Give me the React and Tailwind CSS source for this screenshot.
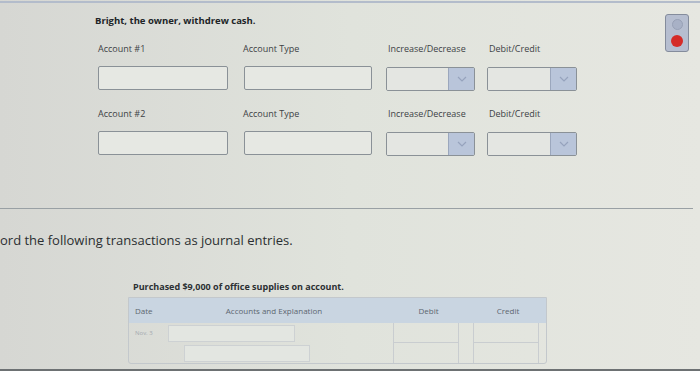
import React from "react";

const font = { fontFamily: "'Open Sans', 'Liberation Sans', sans-serif" };

function TextBox({ className = "" }) {
  return (
    <div className={`h-[24px] border-[1.5px] border-[#8a9197] bg-[#e6e8e3] rounded-[2px] ${className}`} />
  );
}

function Dropdown({ className = "" }) {
  return (
    <div className={`flex h-[24px] border-[1.5px] border-[#8a9197] rounded-[2px] overflow-hidden ${className}`}>
      <div className="flex-1 bg-[#e4e6e2]" />
      <div className="w-[26px] bg-[#b9c5da] border-l border-[#9ba7bd] flex items-center justify-center">
        <svg width="10" height="6" viewBox="0 0 10 6" fill="none">
          <path d="M1 1l4 4 4-4" stroke="#96a3bd" strokeWidth="1.2" />
        </svg>
      </div>
    </div>
  );
}

function EntryRow({ label, labelPad = "pt-[43px]" }) {
  return (
    <div className={`${labelPad}`}>
      <div className="flex text-[9px] leading-[12px] text-[#3d4245]">
        <span className="w-[130px]">{label}</span>
        <span className="ml-[15px] w-[129px]">Account Type</span>
        <span className="ml-[16px] w-[99px]">Increase/Decrease</span>
        <span className="ml-[2px]">Debit/Credit</span>
      </div>
      <div className="flex mt-[11px]">
        <TextBox className="w-[130px]" />
        <TextBox className="ml-[16px] w-[128px]" />
        <Dropdown className="ml-[14px] w-[89px] mt-[1px]" />
        <Dropdown className="ml-[12px] w-[90px] mt-[1px]" />
      </div>
    </div>
  );
}

export default function App() {
  return (
    <div
      style={font}
      className="relative w-[700px] h-[371px] overflow-hidden bg-linear-to-r from-[#d6d7d3] via-[#e0e3dc] to-[#e6e7e1]"
    >
      {/* top edge */}
      <div className="h-[3px] border-t-2 border-[#b3bccb] mt-[1px]" />

      {/* question block */}
      <div className="h-[204px] pl-[98px]">
        <p className="ml-[-3px] pt-[10px] text-[9.5px] leading-[13px] font-bold text-[#202427]">
          Bright, the owner, withdrew cash.
        </p>
        <EntryRow label="Account #1" labelPad="pt-[16px]" />
        <EntryRow label="Account #2" labelPad="pt-[17px]" />
      </div>

      {/* status widget */}
      <div className="absolute left-[665px] top-[14px] w-[24px] h-[38px] rounded-[3px] border border-[#848c9c] bg-[#b6bed0] flex flex-col items-center pt-[4px] gap-[5px]">
        <span className="w-[11px] h-[11px] rounded-full bg-[#a8b1c6] border border-[#98a1b6]" />
        <span className="w-[12px] h-[12px] rounded-full bg-[#d52b28]" />
      </div>

      {/* separator */}
      <div className="w-[693px] border-t-[1.5px] border-[#99a0a4]" />

      {/* second question, cut at the left edge in the shot */}
      <p className="pt-[22px] whitespace-nowrap text-[13px] leading-[18px] text-[#2b2f31]">
        ord the following transactions as journal entries.
      </p>

      <div className="pl-[128px] pt-[32px]">
        <p className="ml-[5px] text-[9px] leading-[12px] font-bold text-[#2c3033]">
          Purchased $9,000 of office supplies on account.
        </p>
        <div className="mt-[4px] w-[419px] border border-[#c3c8cc] rounded-b-[3px]">
          <div className="grid grid-cols-[38px_222px_79px_80px] h-[25px] items-center bg-[#c9d5e1] text-[8px] text-[#5d6770]">
            <span className="pl-[6px]">Date</span>
            <span className="text-center pr-[8px]">Accounts and Explanation</span>
            <span className="text-center">Debit</span>
            <span className="text-center">Credit</span>
          </div>
          <div className="grid grid-cols-[38px_222px_79px_80px] h-[20px] items-center">
            <span className="pl-[6px] text-[6px] text-[#a4aab0]">Nov. 3</span>
            <div className="ml-[1px] w-[127px] h-[17px] border border-[#cdd1d3] bg-[#e3e6e1]" />
            <div className="ml-[4px] w-[66px] h-[20px] border-x border-b border-[#c9cdd0]" />
            <div className="ml-[5px] w-[66px] h-[20px] border-x border-b border-[#c9cdd0]" />
          </div>
          <div className="grid grid-cols-[38px_222px_79px_80px] h-[20px] items-center">
            <span />
            <div className="ml-[17px] w-[126px] h-[17px] border border-[#cdd1d3] bg-[#e3e6e1]" />
            <div className="ml-[4px] w-[66px] h-[20px] border-x border-[#c9cdd0]" />
            <div className="ml-[5px] w-[66px] h-[20px] border-x border-[#c9cdd0]" />
          </div>
        </div>
      </div>

      {/* bottom edge */}
      <div className="absolute left-0 bottom-0 w-full h-[2px] bg-[#6d7173]" />
    </div>
  );
}
